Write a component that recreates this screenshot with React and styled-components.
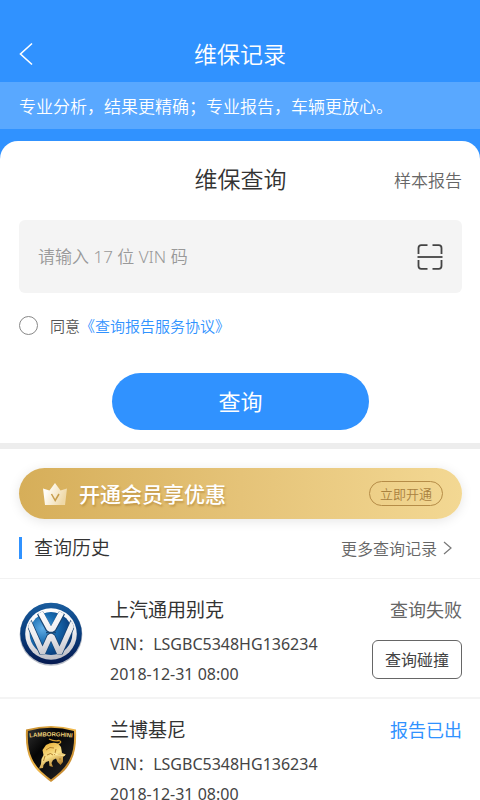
import React, { useState } 				from 'react'
import styled, { createGlobalStyle } 	from 'styled-components'

const records = [
	{
		id: 1,
		brand: 'vw',
		name: '上汽通用别克',
		vin: 'LSGBC5348HG136234',
		date: '2018-12-31 08:00',
		status: '查询失败',
		done: false,
		action: '查询碰撞'
	},
	{
		id: 2,
		brand: 'lamborghini',
		name: '兰博基尼',
		vin: 'LSGBC5348HG136234',
		date: '2018-12-31 08:00',
		status: '报告已出',
		done: true
	}
]

const BackIcon = () => (
	<svg width="14" height="24" viewBox="0 0 14 24" fill="none" stroke="#fff" strokeWidth="1.6">
		<path d="M13 1.5 L1.5 12 L13 22.5" />
	</svg>
)

const ScanIcon = () => (
	<svg width="26" height="26" viewBox="0 0 26 26" fill="none" stroke="#444" strokeWidth="1.8">
		<path d="M1.5 10 V4 Q1.5 1.2 4.3 1.2 H10.5 M15.5 1.2 H21.7 Q24.5 1.2 24.5 4 V10" />
		<path d="M1.5 16 V22 Q1.5 24.8 4.3 24.8 H10.5 M15.5 24.8 H21.7 Q24.5 24.8 24.5 22 V16" />
		<path d="M0.5 13 H25.5" />
	</svg>
)

const CrownIcon = () => (
	<svg width="26" height="24" viewBox="0 0 26 24">
		<defs>
			<linearGradient id="crown" x1="0" y1="0" x2="1" y2="0.4">
				<stop offset="0.25" stopColor="#fffdf8" />
				<stop offset="1" stopColor="#efd9a8" />
			</linearGradient>
		</defs>
		<path d="M1 6.5 L7.5 8.5 L13 1 L18.5 8.5 L25 6.5 L23 23 H3 Z" fill="url(#crown)" />
		<path d="M9.5 12 L13.2 18.5 L17 12" fill="none" stroke="#c79d4c" strokeWidth="1.5" />
	</svg>
)

const MoreIcon = () => (
	<svg width="9" height="14" viewBox="0 0 9 14" fill="none" stroke="#777" strokeWidth="1.2">
		<path d="M1 1 L8 7 L1 13" />
	</svg>
)

const VwLogo = () => (
	<svg width="64" height="64" viewBox="0 0 64 64" role="img" aria-label="Volkswagen">
		<defs>
			<linearGradient id="vwRim" x1="0" y1="0" x2="0" y2="1">
				<stop offset="0" stopColor="#1a5d9e" />
				<stop offset="0.5" stopColor="#083c7c" />
				<stop offset="1" stopColor="#061a50" />
			</linearGradient>
			<radialGradient id="vwFace" cx="0.3" cy="0.38" r="0.75">
				<stop offset="0" stopColor="#62aee6" />
				<stop offset="0.45" stopColor="#176bb0" />
				<stop offset="1" stopColor="#063270" />
			</radialGradient>
			<linearGradient id="vwChrome" gradientUnits="userSpaceOnUse" x1="28" y1="6" x2="36" y2="59">
				<stop offset="0" stopColor="#fff" />
				<stop offset="0.5" stopColor="#ededf0" />
				<stop offset="1" stopColor="#b9bac2" />
			</linearGradient>
			<clipPath id="vwClip"><circle cx="32" cy="32" r="24" /></clipPath>
		</defs>
		<circle cx="32" cy="32.4" r="31.4" fill="#b8bdc7" />
		<circle cx="32" cy="31.5" r="30.8" fill="url(#vwRim)" />
		<circle cx="32" cy="32" r="25.8" fill="url(#vwChrome)" />
		<circle cx="32" cy="31.5" r="21.4" fill="url(#vwFace)" />
		<g clipPath="url(#vwClip)">
			<g fill="none" stroke="#1a4674" strokeWidth="6.8" strokeLinejoin="bevel">
				<path d="M19.5 8 L30 27.5 H34 L44.5 8" />
				<path d="M7 14 L23.5 51 L31 34 H33 L40.5 51 L57 14" />
			</g>
			<g fill="none" stroke="url(#vwChrome)" strokeWidth="5.4" strokeLinejoin="bevel">
				<path d="M19.5 7 L30.4 27 H33.6 L44.5 7" />
				<path d="M7 14 L23.5 51 L31 34.5 H33 L40.5 51 L57 14" />
			</g>
			<path d="M27 30.6 H37" stroke="#174774" strokeWidth="1.4" />
		</g>
	</svg>
)

const LamborghiniLogo = () => (
	<svg width="52" height="58" viewBox="0 0 52 58" role="img" aria-label="Lamborghini">
		<defs>
			<linearGradient id="lbGold" x1="0" y1="0" x2="1" y2="1">
				<stop offset="0" stopColor="#c58b2b" />
				<stop offset="0.5" stopColor="#f0b94d" />
				<stop offset="1" stopColor="#a8681a" />
			</linearGradient>
			<linearGradient id="lbBull" x1="0.2" y1="0" x2="0.7" y2="1">
				<stop offset="0" stopColor="#e7ad34" />
				<stop offset="0.5" stopColor="#fbe28b" />
				<stop offset="1" stopColor="#a66b16" />
			</linearGradient>
			<linearGradient id="lbField" x1="0" y1="0" x2="1" y2="1">
				<stop offset="0" stopColor="#303030" />
				<stop offset="0.35" stopColor="#050505" />
				<stop offset="1" stopColor="#282828" />
			</linearGradient>
		</defs>
		<path
			d="M1 4.5 Q26 -2.5 51 4.5 Q52 24 46.5 35 C42 45 35 50 26 57 C17 50 10 45 5.5 35 Q0 24 1 4.5 Z"
			fill="url(#lbGold)"
		/>
		<path
			d="M3 6 Q26 -0.5 49 6 Q50 23 45 33.5 C41 42.5 34 48.5 26 54.5 C18 48.5 11 42.5 7 33.5 Q2 23 3 6 Z"
			fill="url(#lbField)"
		/>
		<path id="lbArc" d="M1 13 Q26 9.5 51 13" fill="none" />
		<text fill="#efd17a" fontFamily="Liberation Sans" fontWeight="700" fontSize="6" textAnchor="middle">
			<textPath href="#lbArc" startOffset="50%">LAMBORGHINI</textPath>
		</text>
		<path d="M33 19 Q38 17 34 15.5 Q29 16.5 24 14" fill="none" stroke="#d89f2f" strokeWidth="1.3" />
		<path
			d="M21 20 Q27 16.5 33 18.5 L36 22 L37 28 L41 29.5 L38 32 L38 37 L35.5 40 L32.5 37 L31 33.5 L28 35 L26.5 38 L28 42 L24.5 41 L24 36 L21 37 L18.5 40 L18 43 L14 43.5 L16 39 L16.5 34 L18.5 30 L17.5 25 Z"
			fill="url(#lbBull)"
		/>
		<path
			d="M21 25 Q25 21 29 23 M22 30 Q26 27 28 30 M31 24 L29.5 30 M32 29.5 L36 30.5 M34 34 L36 34 M20 31 L18.5 36"
			fill="none" stroke="#a06a1c" strokeWidth="0.8"
		/>
		<path d="M29 28 Q32 31 40 30" fill="none" stroke="#ffeaa0" strokeWidth="1.1" />
	</svg>
)

const logos = { vw: VwLogo, lamborghini: LamborghiniLogo }

const Record = ({ data }) => {
	const Logo = logos[data.brand]

	return (
		<RecordRow>
			<LogoCell><Logo /></LogoCell>
			<div>
				<RecordName>{data.name}</RecordName>
				<RecordLine>VIN：{data.vin}</RecordLine>
				<RecordLine>{data.date}</RecordLine>
			</div>
			<RecordSide>
				<Status $done={data.done}>{data.status}</Status>
				{data.action && <OutlineButton type="button">{data.action}</OutlineButton>}
			</RecordSide>
		</RecordRow>
	)
}

const App = () => {
	const [vin, setVin] = useState('')
	const [agreed, setAgreed] = useState(false)

	return (
		<>
			<GlobalStyle />
			<Page>
				<TopBar>
					<IconButton type="button" aria-label="返回"><BackIcon /></IconButton>
					<PageTitle>维保记录</PageTitle>
				</TopBar>
				<Notice>专业分析，结果更精确；专业报告，车辆更放心。</Notice>

				<Sheet>
					<form onSubmit={(e) => e.preventDefault()}>
						<QueryHead>
							<QueryTitle>维保查询</QueryTitle>
							<SampleLink href="#sample">样本报告</SampleLink>
						</QueryHead>
						<VinField>
							<VinInput
								aria-label="VIN 码"
								placeholder="请输入 17 位 VIN 码"
								maxLength={17}
								value={vin}
								onChange={(e) => setVin(e.target.value)}
							/>
							<IconButton type="button" aria-label="扫描"><ScanIcon /></IconButton>
						</VinField>
						<Agreement>
							<RoundCheck
								id="agree"
								type="checkbox"
								checked={agreed}
								onChange={() => setAgreed(!agreed)}
							/>
							<label htmlFor="agree">同意</label>
							<a href="#terms">《查询报告服务协议》</a>
						</Agreement>
						<SubmitButton type="submit">查询</SubmitButton>
					</form>

					<History>
						<Banner>
							<CrownIcon />
							<BannerText>开通会员享优惠</BannerText>
							<BannerButton type="button">立即开通</BannerButton>
						</Banner>
						<HistoryHead>
							<HistoryTitle>查询历史</HistoryTitle>
							<MoreLink href="#history">更多查询记录<MoreIcon /></MoreLink>
						</HistoryHead>
					</History>
					<RecordList>
						{records.map((r) => <Record key={r.id} data={r} />)}
					</RecordList>
				</Sheet>
			</Page>
		</>
	)
}

export default App

const GlobalStyle = createGlobalStyle`
	* { box-sizing: border-box; }

	body {
		margin: 0;
		background: #fff;
		color: #333;
		font-family: "Noto Sans", "Noto Sans CJK SC", sans-serif;
		font-weight: 350;
		scrollbar-width: none;
	}

	h1, h2, h3, p, ul { margin: 0; padding: 0; font-weight: inherit; }

	a { color: inherit; text-decoration: none; }

	button, input { font: inherit; }
`

const Page = styled.div`
	min-height: 100vh;
	background: #3092ff;
`

const TopBar = styled.header`
	display: grid;
	grid-template-columns: 1fr auto 1fr;
	align-items: center;
	height: 82px;
	padding: 26px 19px 0;
	color: #fff;
`

const IconButton = styled.button`
	display: flex;
	justify-self: start;
	padding: 0;
	border: 0;
	background: none;
	cursor: pointer;
`

const PageTitle = styled.h1`
	font-size: 23px;
	line-height: 32px;
`

const Notice = styled.p`
	padding: 2px 19px 0;
	background: #59a8ff;
	color: #fff;
	font-size: 17px;
	line-height: 45px;
	white-space: nowrap;
`

const Sheet = styled.main`
	margin-top: 12px;
	border-radius: 18px 18px 0 0;
	background: #fff;

	form {
		padding: 0 18px 13px 19px;
		border-bottom: 6px solid #ededed;
	}
`

const QueryHead = styled.div`
	display: grid;
	grid-template-columns: 1fr auto 1fr;
	align-items: center;
	height: 76px;
	margin-bottom: 3px;
`

const QueryTitle = styled.h2`
	grid-column: 2;
	font-size: 23px;
	line-height: 32px;
`

const SampleLink = styled.a`
	justify-self: end;
	color: #666;
	font-size: 17px;
`

const VinField = styled.div`
	display: flex;
	align-items: center;
	height: 73px;
	padding: 0 19px;
	border-radius: 6px;
	background: #f4f4f4;
`

const VinInput = styled.input`
	flex: 1;
	min-width: 0;
	padding: 0;
	border: 0;
	outline: 0;
	background: none;
	color: #333;
	font-size: 17px;

	&::placeholder { color: #999; opacity: 1; }
`

const Agreement = styled.div`
	display: flex;
	align-items: center;
	height: 64px;
	color: #555;
	font-size: 15px;

	a { color: #3092ff; }
`

const RoundCheck = styled.input`
	appearance: none;
	width: 19px;
	height: 19px;
	margin: 0 12px 0 0;
	border: 1px solid #888;
	border-radius: 50%;

	&:checked { border: 5px solid #3092ff; }
`

const SubmitButton = styled.button`
	display: block;
	width: 58%;
	height: 57px;
	margin: 16px auto 0;
	padding: 0 0 4px;
	border: 0;
	border-radius: 29px;
	background: #3092ff;
	color: #fff;
	font-size: 22px;
	font-weight: 400;
	cursor: pointer;
`

const History = styled.section`
	padding: 19px 18px 0 19px;
	border-bottom: 1px solid #f2f2f2;
`

const Banner = styled.div`
	display: flex;
	align-items: center;
	height: 51px;
	padding: 0 19px 0 23px;
	border-radius: 26px;
	background: linear-gradient(90deg, #d6ae59, #e5c378 50%, #f3d893);
	box-shadow: 0 2px 12px rgba(0, 0, 0, 0.1);
`

const BannerText = styled.p`
	margin-left: 11px;
	padding-bottom: 2px;
	color: #fff;
	font-size: 21px;
	font-weight: 500;
	text-shadow: 1px 2px 2px rgba(150, 100, 20, 0.4);
`

const BannerButton = styled.button`
	height: 25px;
	margin-left: auto;
	padding: 0 10px;
	border: 1px solid #b58c47;
	border-radius: 13px;
	background: none;
	color: #a9813f;
	font-size: 13px;
	line-height: 22px;
	cursor: pointer;
`

const HistoryHead = styled.div`
	display: flex;
	align-items: center;
	justify-content: space-between;
	height: 59px;
	padding-bottom: 2px;
`

const HistoryTitle = styled.h2`
	padding-left: 12px;
	border-left: 3px solid #3092ff;
	font-size: 19px;
	line-height: 22px;
`

const MoreLink = styled.a`
	display: flex;
	align-items: center;
	gap: 6px;
	padding-right: 10px;
	color: #666;
	font-size: 16px;
`

const RecordList = styled.ul`
	list-style: none;
`

const RecordRow = styled.li`
	display: grid;
	grid-template-columns: 64px 1fr auto;
	column-gap: 27px;
	height: 120px;
	padding: 17px 18px 0 19px;
	border-bottom: 2px solid #f4f4f4;
	font-weight: 400;
`

const LogoCell = styled.div`
	display: flex;
	align-items: center;
	justify-content: center;
	height: 76px;
`

const RecordName = styled.h3`
	margin-bottom: 5px;
	font-size: 19px;
	line-height: 28px;
`

const RecordLine = styled.p`
	color: #444;
	font-size: 16px;
	line-height: 30px;
	white-space: nowrap;
`

const RecordSide = styled.div`
	display: flex;
	flex-direction: column;
	align-items: flex-end;
	gap: 16px;
`

const Status = styled.p`
	color: ${props => props.$done ? '#3092ff' : '#666'};
	font-size: 18px;
	line-height: 28px;
`

const OutlineButton = styled.button`
	height: 39px;
	padding: 0 12px 2px;
	border: 1px solid #666;
	border-radius: 6px;
	background: none;
	color: #444;
	font-size: 16px;
	cursor: pointer;
`
